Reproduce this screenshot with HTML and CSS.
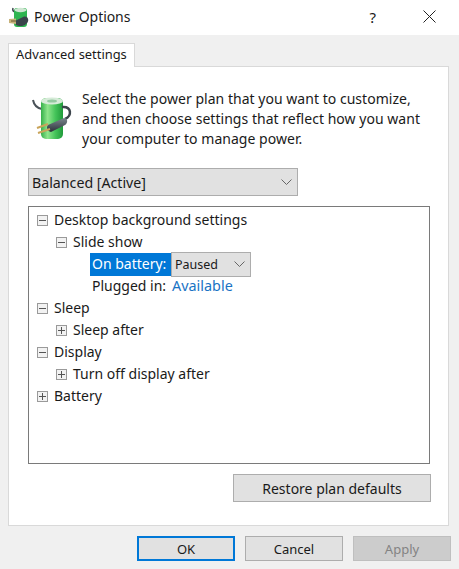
FILE: index.html
```html
<!DOCTYPE html>
<html lang="en">
<head>
    <meta charset="UTF-8">
    <title>Power Options</title>
    <link rel="stylesheet" href="styles.css">
</head>
<body>
    <div class="titlebar">
        <svg class="title-icon" width="20" height="22" viewBox="0 0 20 22">
            <path d="M4 1 C3 4 5 5 7 5" fill="none" stroke="#3f4a50" stroke-width="1.6"/>
            <rect x="5" y="1" width="13" height="19" rx="3" fill="#2fb551"/>
            <ellipse cx="11.5" cy="3" rx="6" ry="2.2" fill="#cfe6d2"/>
            <path d="M6 14 L15 9.5 C20 9 20.5 15 17 17 C14 20 9 19 7 18 Z" fill="#3a444b"/>
            <path d="M0 12 L7 11.5 L7 17 L0 16 Z" fill="#c7b27a"/>
            <path d="M2 14 L7 14" stroke="#6b5a30" stroke-width="1"/>
        </svg>
        <span class="title-text">Power Options</span>
        <span class="title-help">?</span>
        <svg class="title-close" width="13" height="13" viewBox="0 0 13 13">
            <path d="M0.5 0.5 L12.5 12.5 M12.5 0.5 L0.5 12.5" stroke="#222" stroke-width="1" fill="none"/>
        </svg>
    </div>

    <div class="content">
        <div class="tab">Advanced settings</div>
        <div class="panel">
            <div class="intro">
                <svg class="intro-icon" width="42" height="50" viewBox="0 0 42 50">
                    <defs>
                        <linearGradient id="battery" x1="0" x2="1" y1="0" y2="0">
                            <stop offset="0" stop-color="#35b04a"/>
                            <stop offset="0.3" stop-color="#8fe58c"/>
                            <stop offset="0.65" stop-color="#45c45a"/>
                            <stop offset="1" stop-color="#1f9a3a"/>
                        </linearGradient>
                        <linearGradient id="plug" x1="0" x2="0" y1="0" y2="1">
                            <stop offset="0" stop-color="#7b868e"/>
                            <stop offset="1" stop-color="#2a3238"/>
                        </linearGradient>
                    </defs>
                    <path d="M1 4 C2 9 4 12 10 13" fill="none" stroke="#4a5258" stroke-width="2"/>
                    <rect x="9" y="2" width="22" height="41" rx="5" fill="url(#battery)"/>
                    <ellipse cx="20" cy="5" rx="11" ry="3.6" fill="#d6ebd8"/>
                    <ellipse cx="20" cy="5" rx="5" ry="1.6" fill="#93c9a0"/>
                    <path d="M30 11 C40 10 40 20 33 23" fill="none" stroke="#3d454c" stroke-width="2.5"/>
                    <path d="M16 29 L32 22 C36 22 36 27 33 29 L19 36 C15 35 14 31 16 29 Z" fill="url(#plug)"/>
                    <path d="M5 32 L16 28 M6 37 L18 33" stroke="#c9a45a" stroke-width="2"/>
                </svg>
                <p class="intro-text">Select the power plan that you want to customize,<br>and then choose settings that reflect how you want<br>your computer to manage power.</p>
            </div>

            <div class="combo combo-plan">
                <span>Balanced [Active]</span>
                <svg width="11" height="6" viewBox="0 0 11 6"><path d="M0.5 0.5 L5.5 5.5 L10.5 0.5" fill="none" stroke="#666"/></svg>
            </div>

            <div class="tree">
                <div class="row">
                    <span class="box"><i class="dash"></i></span>
                    <span class="row-text">Desktop background settings</span>
                </div>
                <div class="row level-2">
                    <span class="box"><i class="dash"></i></span>
                    <span class="row-text">Slide show</span>
                </div>
                <div class="row level-3">
                    <span class="label selected">On battery:</span>
                    <div class="combo combo-small">
                        <span>Paused</span>
                        <svg width="11" height="6" viewBox="0 0 11 6"><path d="M0.5 0.5 L5.5 5.5 L10.5 0.5" fill="none" stroke="#666"/></svg>
                    </div>
                </div>
                <div class="row level-3">
                    <span class="label row-text">Plugged in:</span>
                    <span class="value row-text">Available</span>
                </div>
                <div class="row">
                    <span class="box"><i class="dash"></i></span>
                    <span class="row-text">Sleep</span>
                </div>
                <div class="row level-2">
                    <span class="box"><i class="dash"></i><i class="bar"></i></span>
                    <span class="row-text">Sleep after</span>
                </div>
                <div class="row">
                    <span class="box"><i class="dash"></i></span>
                    <span class="row-text">Display</span>
                </div>
                <div class="row level-2">
                    <span class="box"><i class="dash"></i><i class="bar"></i></span>
                    <span class="row-text">Turn off display after</span>
                </div>
                <div class="row">
                    <span class="box"><i class="dash"></i><i class="bar"></i></span>
                    <span class="row-text">Battery</span>
                </div>
            </div>

            <div class="restore-row">
                <button class="btn btn-restore">Restore plan defaults</button>
            </div>
        </div>

        <div class="actions">
            <button class="btn btn-ok">OK</button>
            <button class="btn">Cancel</button>
            <button class="btn btn-disabled">Apply</button>
        </div>
    </div>
</body>
</html>
```

FILE: styles.css
```css
* {
    margin: 0;
    padding: 0;
    box-sizing: border-box;
}

body {
    width: 459px;
    height: 569px;
    overflow: hidden;
    font-family: "Noto Sans", "Open Sans", sans-serif;
    font-size: 14px;
    color: #1a1a1a;
    background-color: #f0f0f0;
}

.titlebar {
    height: 35px;
    display: flex;
    align-items: center;
    padding: 0 23px 0 9px;
    background-color: white;
}

.title-icon {
    margin-right: 5px;
}

.title-text {
    flex: 1;
    padding-bottom: 2px;
    font-size: 14px;
    letter-spacing: -0.05px;
}

.title-help {
    margin-right: 47px;
    padding-bottom: 2px;
    font-size: 15px;
}

.title-close {
    margin-bottom: 3px;
}

.content {
    padding: 8px 8px 0;
}

.tab {
    width: 127px;
    height: 24px;
    margin-bottom: -1px;
    position: relative;
    padding-left: 7px;
    font-size: 12.9px;
    line-height: 21px;
    background-color: white;
    border: 1px solid #d9d9d9;
    border-bottom: none;
}

.panel {
    width: 441px;
    height: 460px;
    padding: 0 18px 0 19px;
    background-color: white;
    border: 1px solid #d9d9d9;
}

.intro {
    height: 101px;
    padding-top: 21px;
    display: flex;
}

.intro-icon {
    margin: 8px 0 0 4px;
}

.intro-text {
    margin: 1px 0 0 8px;
    font-size: 14px;
    line-height: 20px;
    letter-spacing: 0.03px;
}

.combo {
    display: flex;
    justify-content: space-between;
    align-items: center;
    background-color: #e1e1e1;
    border: 1px solid #adadad;
}

.combo-plan {
    width: 270px;
    height: 28px;
    padding: 0 5px 0 3px;
    font-size: 14.2px;
}

.tree {
    width: 402px;
    height: 258px;
    margin-top: 10px;
    padding-top: 2px;
    border: 1px solid #7a7a7a;
}

.row {
    height: 22px;
    display: flex;
    align-items: center;
    padding-left: 8px;
    white-space: nowrap;
}

.row-text {
    padding-bottom: 2px;
}

.level-2 {
    padding-left: 27px;
}

.level-3 {
    padding-left: 61px;
}

.box {
    width: 11px;
    height: 11px;
    margin-right: 6px;
    position: relative;
    flex-shrink: 0;
    background-color: #f2f2f2;
    border: 1px solid #9a9a9a;
}

.dash {
    position: absolute;
    left: 1px;
    top: 4px;
    width: 7px;
    height: 1px;
    background-color: #555;
}

.bar {
    position: absolute;
    left: 4px;
    top: 1px;
    width: 1px;
    height: 7px;
    background-color: #555;
}

.label {
    width: 81px;
    padding-left: 2px;
}

.selected {
    height: 23px;
    line-height: 21px;
    color: white;
    background-color: #0078d7;
}

.combo-small {
    width: 80px;
    height: 25px;
    padding: 0 5px 0 3px;
    font-size: 12.5px;
}

.value {
    padding-left: 1px;
    font-size: 14.4px;
    color: #1a73c4;
}

.restore-row {
    display: flex;
    justify-content: flex-end;
    width: 403px;
    margin-top: 10px;
}

button {
    font-family: inherit;
    color: inherit;
}

.btn {
    width: 98px;
    height: 25px;
    font-size: 13px;
    background-color: #e1e1e1;
    border: 1px solid #adadad;
}

.btn-restore {
    width: 198px;
    height: 28px;
    font-size: 14px;
}

.actions {
    display: flex;
    gap: 10px;
    margin-top: 10px;
    padding-left: 129px;
}

.btn-ok {
    border: 2px solid #0078d7;
}

.btn-disabled {
    color: #838383;
    background-color: #cccccc;
    border-color: #bfbfbf;
}
```
